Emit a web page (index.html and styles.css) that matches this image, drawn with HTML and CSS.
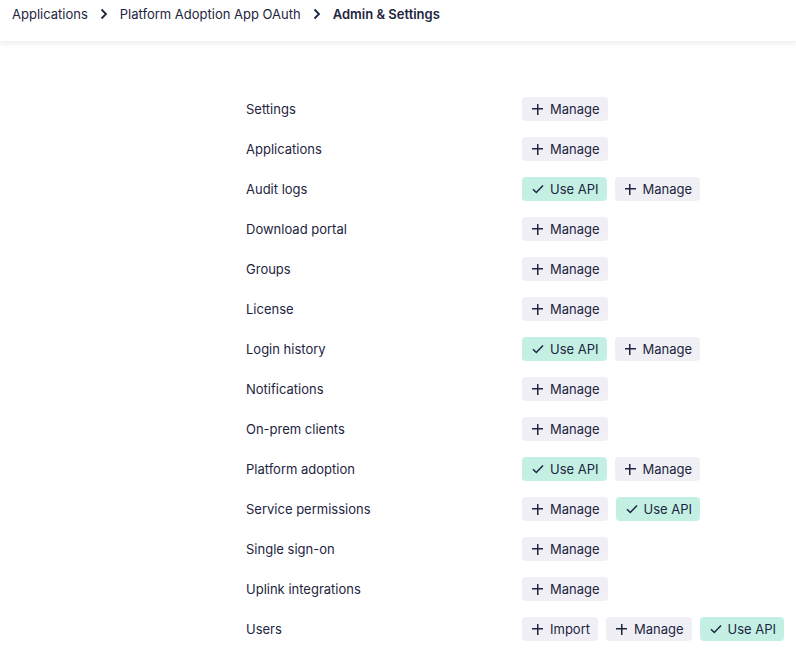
FILE: index.html
```html
<!DOCTYPE html>
<html lang="en">

<head>
    <meta charset="UTF-8">
    <meta name="viewport" content="width=device-width, initial-scale=1.0">
    <title>Admin &amp; Settings</title>
    <link rel="stylesheet" href="styles.css">
</head>

<body>
    <div class="header">
        <ul class="crumbs">
            <li><a href="#">Applications</a></li>
            <li class="sep"><svg width="8" height="12" viewBox="0 0 8 12"><path d="M1.5 1.5 6 6l-4.5 4.5" fill="none" stroke="#1d2540" stroke-width="1.8"/></svg></li>
            <li><a href="#">Platform Adoption App OAuth</a></li>
            <li class="sep"><svg width="8" height="12" viewBox="0 0 8 12"><path d="M1.5 1.5 6 6l-4.5 4.5" fill="none" stroke="#1d2540" stroke-width="1.8"/></svg></li>
            <li class="current">Admin &amp; Settings</li>
        </ul>
    </div>

    <div class="perms">
        <div class="row">
            <div class="name">Settings</div>
            <div class="actions"><span class="btn">Manage</span></div>
        </div>
        <div class="row">
            <div class="name">Applications</div>
            <div class="actions"><span class="btn">Manage</span></div>
        </div>
        <div class="row">
            <div class="name">Audit logs</div>
            <div class="actions"><span class="btn on">Use API</span><span class="btn">Manage</span></div>
        </div>
        <div class="row">
            <div class="name">Download portal</div>
            <div class="actions"><span class="btn">Manage</span></div>
        </div>
        <div class="row">
            <div class="name">Groups</div>
            <div class="actions"><span class="btn">Manage</span></div>
        </div>
        <div class="row">
            <div class="name">License</div>
            <div class="actions"><span class="btn">Manage</span></div>
        </div>
        <div class="row">
            <div class="name">Login history</div>
            <div class="actions"><span class="btn on">Use API</span><span class="btn">Manage</span></div>
        </div>
        <div class="row">
            <div class="name">Notifications</div>
            <div class="actions"><span class="btn">Manage</span></div>
        </div>
        <div class="row">
            <div class="name">On-prem clients</div>
            <div class="actions"><span class="btn">Manage</span></div>
        </div>
        <div class="row">
            <div class="name">Platform adoption</div>
            <div class="actions"><span class="btn on">Use API</span><span class="btn">Manage</span></div>
        </div>
        <div class="row">
            <div class="name">Service permissions</div>
            <div class="actions"><span class="btn">Manage</span><span class="btn on">Use API</span></div>
        </div>
        <div class="row">
            <div class="name">Single sign-on</div>
            <div class="actions"><span class="btn">Manage</span></div>
        </div>
        <div class="row">
            <div class="name">Uplink integrations</div>
            <div class="actions"><span class="btn">Manage</span></div>
        </div>
        <div class="row">
            <div class="name">Users</div>
            <div class="actions"><span class="btn">Import</span><span class="btn">Manage</span><span class="btn on">Use API</span></div>
        </div>
    </div>
</body>

</html>
```

FILE: styles.css
```css
* {
    margin: 0;
    padding: 0;
    box-sizing: border-box;
}

body {
    font-family: Inter, "Noto Sans", sans-serif;
    font-size: 13px;
    color: #1d2540;
    background-color: #fff;
}

li {
    list-style: none;
}

a {
    color: inherit;
    text-decoration: none;
}

.header {
    height: 41px;
    padding: 0 12px;
    background-color: #fff;
    box-shadow: 0 2px 6px rgba(40, 50, 90, 0.1);
}

.crumbs {
    display: flex;
    align-items: center;
    height: 28px;
    gap: 12px;
}

.crumbs .sep {
    display: flex;
    align-items: center;
}

.crumbs .current {
    font-weight: 600;
}

.perms {
    padding: 48px 0 0 246px;
}

.row {
    display: flex;
    align-items: center;
    height: 40px;
}

.name {
    width: 276px;
}

.actions {
    display: flex;
    gap: 8px;
}

.btn {
    display: flex;
    align-items: center;
    height: 24px;
    padding: 0 8px 0 10px;
    border-radius: 4px;
    background-color: #f0eff5;
    cursor: pointer;
}

.btn::before {
    content: "";
    width: 11px;
    height: 11px;
    margin-right: 7px;
    background: linear-gradient(#1d2540, #1d2540) center / 11px 1.5px no-repeat,
        linear-gradient(#1d2540, #1d2540) center / 1.5px 11px no-repeat;
}

.btn.on {
    background-color: #c3f0e2;
}

.btn.on::before {
    width: 12px;
    height: 10px;
    margin-right: 6px;
    background: url("data:image/svg+xml,%3Csvg xmlns='http://www.w3.org/2000/svg' width='12' height='10' viewBox='0 0 12 10'%3E%3Cpath d='M1 5.2 4.3 8.5 11 1.5' fill='none' stroke='%231d2540' stroke-width='1.5'/%3E%3C/svg%3E") no-repeat;
}
```
